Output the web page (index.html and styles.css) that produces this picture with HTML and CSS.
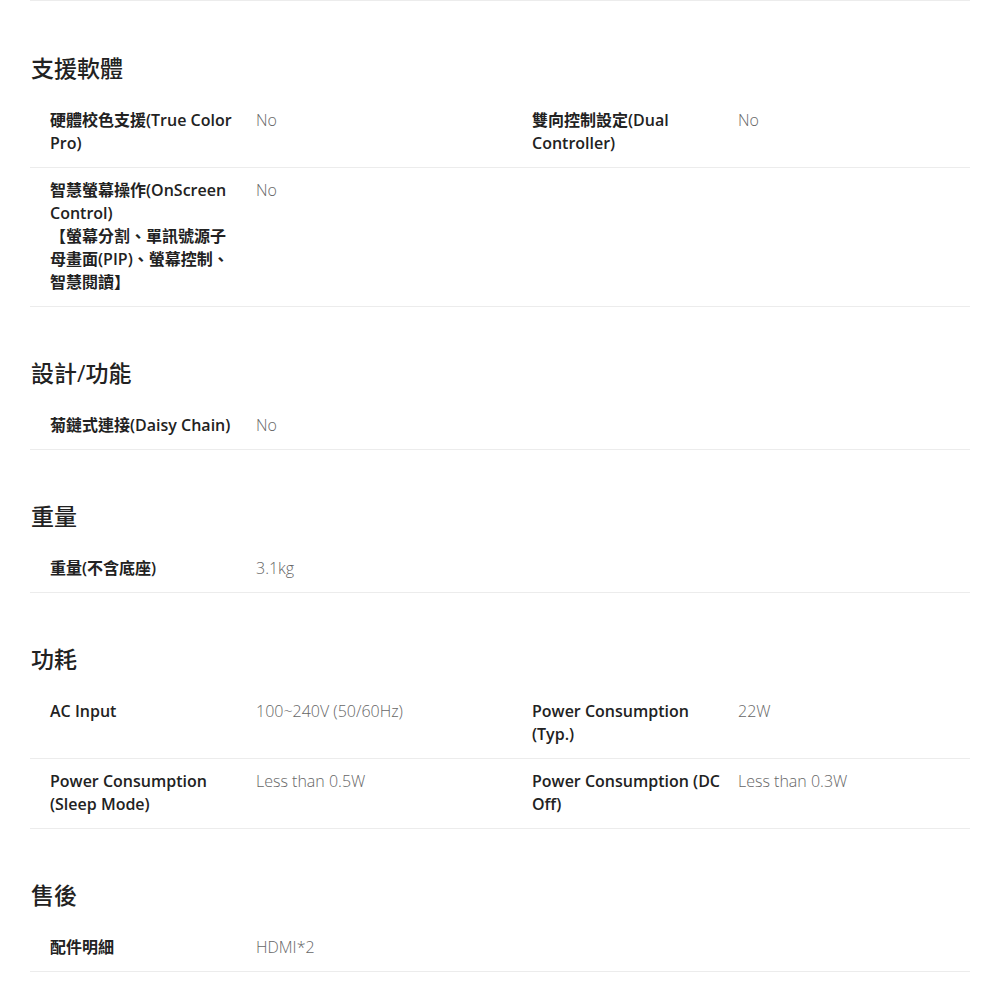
FILE: index.html
```html
<!DOCTYPE html>
<html lang="zh-Hant">
<head>
  <meta charset="UTF-8">
  <title>規格</title>
  <link rel="stylesheet" href="styles.css">
</head>
<body>

  <div class="specs">
    <div class="top-rule"></div>

    <section class="spec-group">
      <h2>支援軟體</h2>
      <div class="spec-row">
        <div class="spec-item">
          <div class="spec-label">硬體校色支援(True Color Pro)</div>
          <div class="spec-value">No</div>
        </div>
        <div class="spec-item">
          <div class="spec-label">雙向控制設定(Dual Controller)</div>
          <div class="spec-value">No</div>
        </div>
      </div>
      <div class="spec-row">
        <div class="spec-item">
          <div class="spec-label">智慧螢幕操作(OnScreen Control)<br>【螢幕分割、單訊號源子母畫面(PIP)、螢幕控制、智慧閱讀】</div>
          <div class="spec-value">No</div>
        </div>
      </div>
    </section>

    <section class="spec-group">
      <h2>設計/功能</h2>
      <div class="spec-row">
        <div class="spec-item">
          <div class="spec-label">菊鏈式連接(Daisy Chain)</div>
          <div class="spec-value">No</div>
        </div>
      </div>
    </section>

    <section class="spec-group">
      <h2>重量</h2>
      <div class="spec-row">
        <div class="spec-item">
          <div class="spec-label">重量(不含底座)</div>
          <div class="spec-value">3.1kg</div>
        </div>
      </div>
    </section>

    <section class="spec-group">
      <h2>功耗</h2>
      <div class="spec-row">
        <div class="spec-item">
          <div class="spec-label">AC Input</div>
          <div class="spec-value">100~240V (50/60Hz)</div>
        </div>
        <div class="spec-item">
          <div class="spec-label">Power Consumption (Typ.)</div>
          <div class="spec-value">22W</div>
        </div>
      </div>
      <div class="spec-row">
        <div class="spec-item">
          <div class="spec-label">Power Consumption (Sleep Mode)</div>
          <div class="spec-value">Less than 0.5W</div>
        </div>
        <div class="spec-item">
          <div class="spec-label">Power Consumption (DC Off)</div>
          <div class="spec-value">Less than 0.3W</div>
        </div>
      </div>
    </section>

    <section class="spec-group">
      <h2>售後</h2>
      <div class="spec-row">
        <div class="spec-item">
          <div class="spec-label">配件明細</div>
          <div class="spec-value">HDMI*2</div>
        </div>
      </div>
    </section>
  </div>

</body>
</html>
```

FILE: styles.css
```css
body {
  margin: 0;
  font-family: 'Open Sans', 'Noto Sans CJK TC', sans-serif;
  background-color: #fff;
  color: #222;
}

.specs {
  width: 940px;
  margin: 0 30px;
}

.top-rule {
  border-top: 1px solid #ececec;
}

.spec-group {
  padding-top: 50.5px;
}

.spec-group:first-of-type {
  padding-top: 51px;
}

.spec-group h2 {
  margin: 0 0 13.5px 1px;
  font-size: 23px;
  line-height: 32px;
  font-weight: 500;
  color: #222;
}

.spec-row {
  display: grid;
  grid-template-columns: 482px 1fr;
  padding: 11.5px 0 11.5px 20px;
  border-bottom: 1px solid #ececec;
}

.spec-item {
  display: grid;
  grid-template-columns: 206px 1fr;
}

.spec-label {
  padding-right: 16px;
  font-size: 16px;
  line-height: 23px;
  font-weight: 600;
  color: #222;
}

.spec-value {
  font-size: 16px;
  line-height: 23px;
  font-weight: 300;
  color: #666;
}
```
